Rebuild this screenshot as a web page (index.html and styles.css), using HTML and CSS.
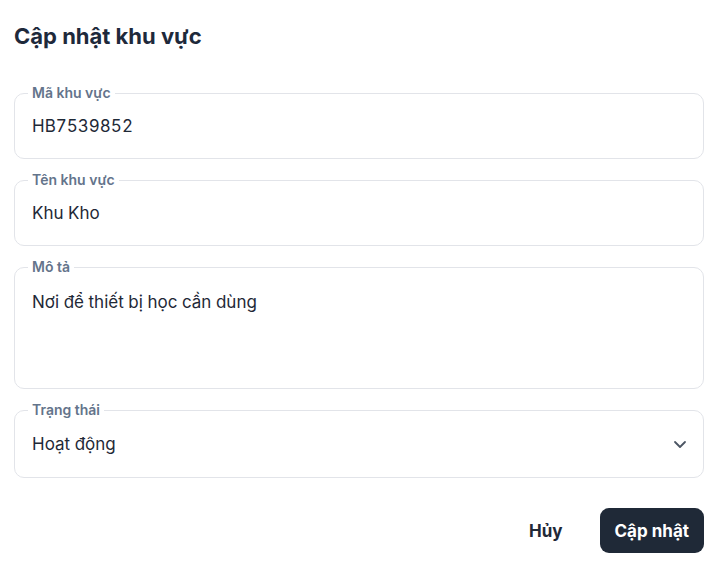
FILE: index.html
```html
<!DOCTYPE html>
<html lang="vi">
<head>
    <meta charset="UTF-8">
    <meta name="viewport" content="width=device-width, initial-scale=1.0">
    <title>Cập nhật khu vực</title>
    <link rel="stylesheet" href="styles.css">
</head>
<body>
    <div class="dialog">
        <h2 class="title">Cập nhật khu vực</h2>

        <form class="area-form">
            <fieldset class="field">
                <legend>Mã khu vực</legend>
                <input type="text" class="control" value="HB7539852">
            </fieldset>

            <fieldset class="field">
                <legend>Tên khu vực</legend>
                <input type="text" class="control" value="Khu Kho">
            </fieldset>

            <fieldset class="field field-area">
                <legend>Mô tả</legend>
                <textarea class="control area" rows="3">Nơi để thiết bị học cần dùng</textarea>
            </fieldset>

            <fieldset class="field field-select">
                <legend>Trạng thái</legend>
                <div class="select">
                    <span class="control">Hoạt động</span>
                    <svg class="chevron" width="16" height="16" viewBox="0 0 16 16" fill="none">
                        <path d="M3 6l5 5 5-5" stroke="#4b5563" stroke-width="1.8" stroke-linecap="round" stroke-linejoin="round"/>
                    </svg>
                </div>
            </fieldset>

            <div class="actions">
                <button type="button" class="btn btn-ghost">Hủy</button>
                <button type="button" class="btn btn-primary">Cập nhật</button>
            </div>
        </form>
    </div>
</body>
</html>
```

FILE: styles.css
```css
body {
    margin: 0;
    font-family: Inter, "Noto Sans", sans-serif;
    color: #1f2937;
    background: #fff;
}
.dialog {
    padding: 22px 22px 0 14px;
}
.title {
    margin: 0 0 35px;
    font-size: 22px;
    line-height: 28px;
    font-weight: 700;
    color: #1e293b;
}
.area-form {
    display: flex;
    flex-direction: column;
    gap: 13px;
}
.field {
    margin: 0;
    padding: 13px 17px 20px;
    border: 1px solid #e2e4e9;
    border-radius: 10px;
    min-width: 0;
}
.field legend {
    padding: 0 4px;
    margin-left: -4px;
    font-size: 14px;
    line-height: 16px;
    font-weight: 600;
    color: #64748b;
}
.control {
    display: block;
    width: 100%;
    box-sizing: border-box;
    padding: 0;
    border: none;
    outline: none;
    background: transparent;
    font-family: inherit;
    font-size: 17px;
    line-height: 24px;
    height: 24px;
    color: #1f2937;
    font-variant-numeric: tabular-nums;
}
.area {
    height: 72px;
    resize: none;
}
.field-area {
    padding-top: 15px;
    padding-bottom: 26px;
}
.field-select {
    padding-top: 14px;
    padding-bottom: 21px;
}
.select {
    display: flex;
    align-items: center;
    justify-content: space-between;
}
.chevron {
    flex: none;
    margin-right: -2px;
}
.actions {
    display: flex;
    justify-content: flex-end;
    align-items: center;
    gap: 22px;
    margin-top: 17px;
}
.btn {
    font-family: inherit;
    font-size: 17px;
    font-weight: 700;
    border: none;
    border-radius: 9px;
    height: 45px;
    padding: 0 15px;
    cursor: pointer;
}
.btn-ghost {
    background: transparent;
    color: #1f2937;
}
.btn-primary {
    background: #1f2937;
    color: #fff;
}
```
